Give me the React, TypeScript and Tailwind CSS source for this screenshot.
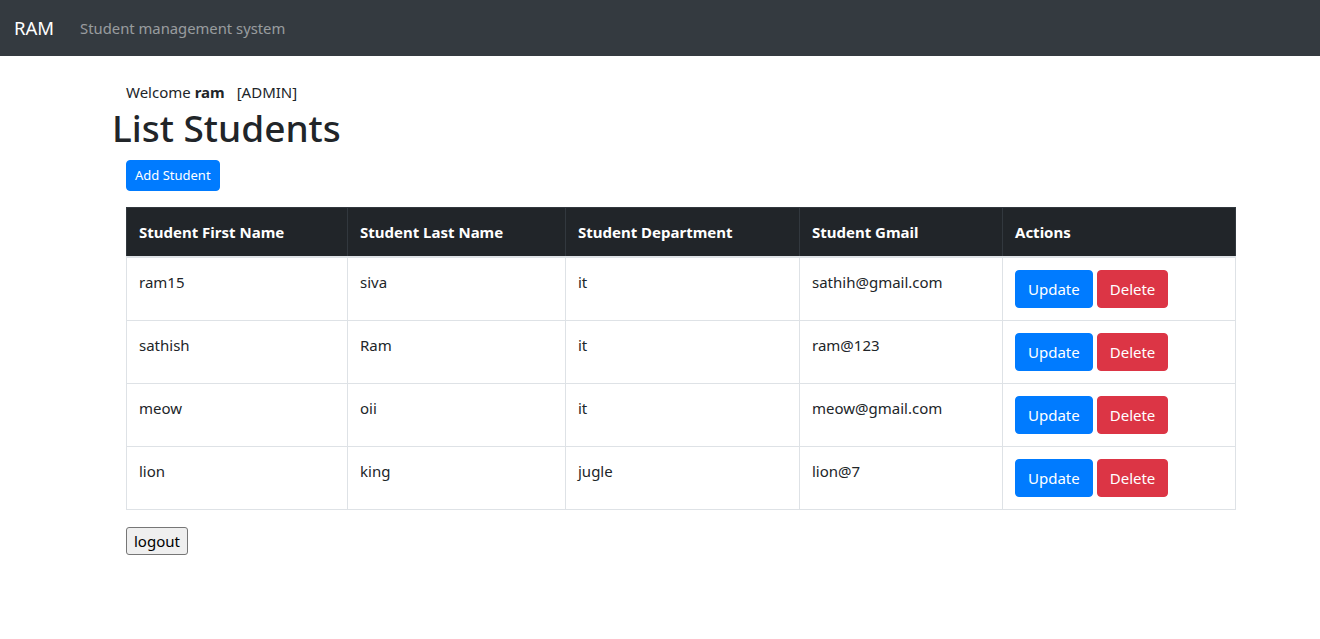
const students = [
  { first: "ram15", last: "siva", dept: "it", mail: "sathih@gmail.com" },
  { first: "sathish", last: "Ram", dept: "it", mail: "ram@123" },
  { first: "meow", last: "oii", dept: "it", mail: "meow@gmail.com" },
  { first: "lion", last: "king", dept: "jugle", mail: "lion@7" },
];

const font = { fontFamily: '"Segoe UI", "Noto Sans", Arial, sans-serif' };

const th = "border border-b-2 border-[#32383e] border-b-[#dee2e6] p-3 font-bold";
const td = "border border-[#dee2e6] p-3 align-top";

export default function App() {
  return (
    <div className="min-h-[639px] bg-white text-[#212529]" style={font}>
      <nav className="flex h-14 items-center bg-[#343a40] px-[14px]">
        <span className="mr-[18px] text-[18.5px] leading-[30px] text-white">RAM</span>
        <a className="px-2 text-[14.8px] text-white/50">Student management system</a>
      </nav>

      <main className="pl-[126px] pr-[84px]">
        <div className="pt-6 text-[15px] leading-6">
          Welcome <b className="font-bold">ram</b>
          <span className="ml-[12px]">[ADMIN]</span>
        </div>
        <h1 className="-ml-[14px] mb-2 text-[37px] font-medium leading-[48px]">List Students</h1>
        <button className="rounded border border-[#007bff] bg-[#007bff] px-2 py-1 text-[13px] leading-[21px] text-white">
          Add Student
        </button>

        <table className="mt-4 w-[1109px] table-fixed border-collapse text-[15px] leading-6">
          <colgroup>
            <col className="w-[221px]" />
            <col className="w-[218px]" />
            <col className="w-[234px]" />
            <col className="w-[203px]" />
            <col className="w-[233px]" />
          </colgroup>
          <thead>
            <tr className="bg-[#212529] text-left text-white">
              <th className={th}>Student First Name</th>
              <th className={th}>Student Last Name</th>
              <th className={th}>Student Department</th>
              <th className={th}>Student Gmail</th>
              <th className={th}>Actions</th>
            </tr>
          </thead>
          <tbody>
            {students.map((s) => (
              <tr key={s.first}>
                <td className={td}>{s.first}</td>
                <td className={td}>{s.last}</td>
                <td className={td}>{s.dept}</td>
                <td className={td}>{s.mail}</td>
                <td className={td}>
                  <div className="flex gap-1">
                    <button className="rounded border border-[#007bff] bg-[#007bff] px-3 py-1.5 leading-6 text-white">
                      Update
                    </button>
                    <button className="rounded border border-[#dc3545] bg-[#dc3545] px-3 py-1.5 leading-6 text-white">
                      Delete
                    </button>
                  </div>
                </td>
              </tr>
            ))}
          </tbody>
        </table>

        <button className="mt-[17px] h-[28px] rounded-[3px] border border-[#767676] bg-[#efefef] px-[7px] text-[15px] leading-[26px] text-black">
          logout
        </button>
      </main>
    </div>
  );
}
